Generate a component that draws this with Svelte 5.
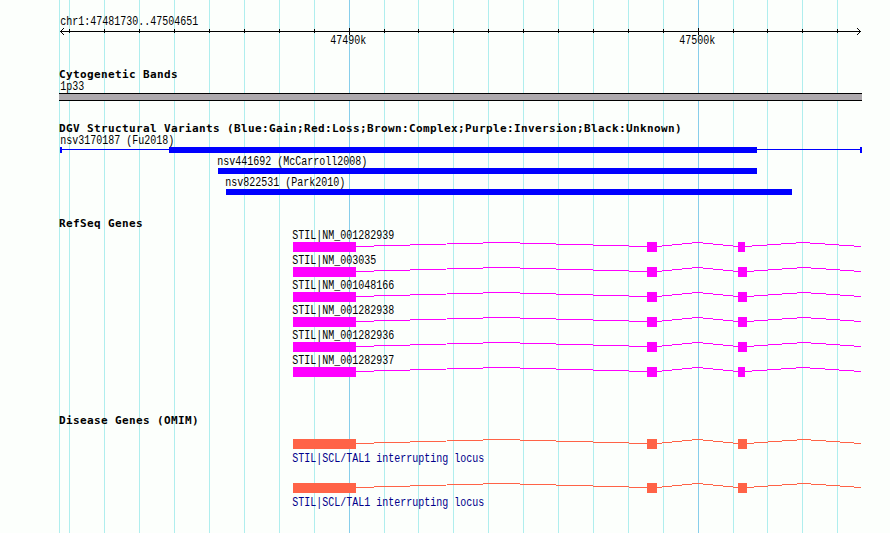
<script>
	const gridLines = [
		59, 69, 104, 139, 174, 209, 244, 279, 314, 349, 384, 418, 453, 488, 523, 558, 593, 628, 663,
		698, 733, 767, 802, 837,
	];

	const majorTicks = [
		{ x: 349, text: "47490k" },
		{ x: 698, text: "47500k" },
	];

	const minorTicks = gridLines.filter((x) => x > 59 && x !== 349 && x !== 698);

	const variants = [
		{ name: "nsv3170187 (Fu2018)", labelX: 60, start: 169, end: 757, range: true },
		{ name: "nsv441692 (McCarroll2008)", labelX: 217, start: 218, end: 757 },
		{ name: "nsv822531 (Park2010)", labelX: 225, start: 226, end: 792 },
	];

	const transcripts = [
		{ name: "STIL|NM_001282939", lastEnd: 745 },
		{ name: "STIL|NM_003035", lastEnd: 747 },
		{ name: "STIL|NM_001048166", lastEnd: 747 },
		{ name: "STIL|NM_001282938", lastEnd: 747 },
		{ name: "STIL|NM_001282936", lastEnd: 747 },
		{ name: "STIL|NM_001282937", lastEnd: 745 },
	];

	const diseaseGenes = ["STIL|SCL/TAL1 interrupting locus", "STIL|SCL/TAL1 interrupting locus"];

	// introns are drawn as a shallow peak between two exons
	function intron(from, to) {
		return `M${from} 16.5L${(from + to) / 2} 12.5L${to} 16.5`;
	}
</script>

{#snippet label(text, x, y)}
	<text x={x + 0.3} {y} textLength={text.length * 6} lengthAdjust="spacingAndGlyphs">{text}</text>
{/snippet}

{#snippet gene(lastEnd)}
	<path class="intron" d={intron(356, 647) + intron(657, 738) + intron(lastEnd, 861)} />
	<rect x="293" y="12" width="63" height="10" />
	<rect x="647" y="12" width="10" height="10" />
	<rect x="738" y="12" width={lastEnd - 738} height="10" />
{/snippet}

<main class="browser">
	<svg class="grid" width="890" height="533">
		{#each gridLines as x}
			<rect {x} y="0" width="1" height="533" class:major={x === 349 || x === 698} />
		{/each}
	</svg>

	<svg class="ruler" width="890" height="68">
		{@render label("chr1:47481730..47504651", 60, 25)}
		<rect x="60" y="31" width="801" height="1" />
		<path class="arrow" d="M64 28L60.5 31.5L64 35M857 28L860.5 31.5L857 35" />
		{#each minorTicks as x}
			<rect {x} y="29" width="1" height="4" />
		{/each}
		{#each majorTicks as tick}
			<rect x={tick.x} y="28" width="1" height="7" />
			{@render label(tick.text, tick.x - 19, 44)}
		{/each}
	</svg>

	<section>
		<h2>Cytogenetic Bands</h2>
		<svg width="890" height="41">
			{@render label("1p33", 60, 9)}
			<rect x="59" y="12" width="803" height="8" />
			<rect class="band" x="59" y="13" width="803" height="6" />
		</svg>
	</section>

	<section>
		<h2>DGV Structural Variants (Blue:Gain;Red:Loss;Brown:Complex;Purple:Inversion;Black:Unknown)</h2>
		<svg width="890" height="82">
			{#each variants as variant, i}
				<g transform="translate(0 {i * 21})">
					{@render label(variant.name, variant.labelX, 9)}
					<g class="variant">
						{#if variant.range}
							<rect x="60" y="14" width="802" height="1" />
							<rect x="60" y="12" width="2" height="6" />
							<rect x="860" y="12" width="2" height="6" />
						{/if}
						<rect x={variant.start} y="12" width={variant.end - variant.start} height="6" />
					</g>
				</g>
			{/each}
		</svg>
	</section>

	<section>
		<h2>RefSeq Genes</h2>
		<svg width="890" height="184">
			{#each transcripts as transcript, i}
				<g transform="translate(0 {i * 25})">
					<g class="refseq">{@render gene(transcript.lastEnd)}</g>
					{@render label(transcript.name, 292, 9)}
				</g>
			{/each}
		</svg>
	</section>

	<section>
		<h2>Disease Genes (OMIM)</h2>
		<svg width="890" height="106">
			{#each diseaseGenes as name, i}
				<g transform="translate(0 {i * 44})">
					<g class="omim">{@render gene(747)}</g>
					<g class="omim-label">{@render label(name, 292, 35)}</g>
				</g>
			{/each}
		</svg>
	</section>
</main>

<style>
	:global(body) {
		margin: 0;
		background: #fcfffc;
	}

	.browser {
		position: relative;
		display: flex;
		flex-direction: column;
		width: 890px;
		height: 533px;
		overflow: hidden;
		font-family: "DejaVu Sans Mono", monospace;
		color: #000;
	}

	svg {
		display: block;
		position: relative;
		shape-rendering: crispEdges;
	}

	.grid {
		position: absolute;
		top: 0;
		left: 0;
		fill: #afeeee;
	}

	.major {
		fill: #87ceeb;
	}

	h2 {
		position: relative;
		height: 13px;
		margin: 0 0 0 59px;
		font-size: 11px;
		line-height: 13px;
		font-weight: bold;
		letter-spacing: 0.378px;
		white-space: nowrap;
	}

	text {
		font-family: "Liberation Mono", monospace;
		font-size: 12px;
		white-space: pre;
	}

	.arrow {
		fill: none;
		stroke: #000;
	}

	.band {
		fill: #ada9ad;
	}

	.variant {
		fill: #00f;
	}

	.refseq {
		fill: #f0f;
	}

	.intron {
		fill: none;
	}

	.refseq .intron {
		stroke: #f0f;
	}

	.omim {
		fill: #ff6347;
	}

	.omim .intron {
		stroke: #ff6347;
	}

	.omim-label {
		fill: #00008b;
	}
</style>
